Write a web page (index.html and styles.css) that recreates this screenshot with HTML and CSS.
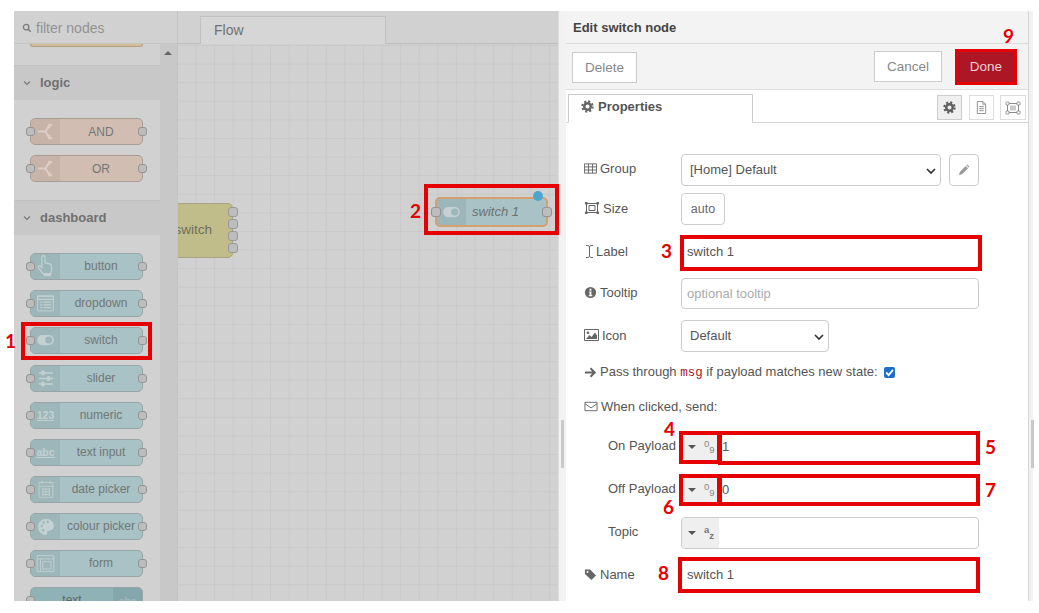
FILE: index.html
```html
<!DOCTYPE html>
<html lang="en">
<head>
    <meta charset="UTF-8">
    <title>Edit switch node</title>
    <link rel="stylesheet" href="styles.css">
</head>
<body>
    <svg class="defs" width="0" height="0">
        <symbol id="i-gear" viewBox="0 0 16 16"><circle cx="8" cy="8" r="4" fill="none" stroke="currentColor" stroke-width="3"/><circle cx="8" cy="8" r="6.3" fill="none" stroke="currentColor" stroke-width="2.6" stroke-dasharray="2.6 2.35"/></symbol>
        <symbol id="i-split" viewBox="0 0 30 27"><path d="M7 13.500h8M22 6l-3.500 1.500-3.500 6 3.500 6 3.500 1.500M19 5v5M19 17v5" fill="none" stroke="currentColor" stroke-width="2.200"/></symbol>
        <symbol id="i-toggle" viewBox="0 0 30 27"><rect x="6" y="7.500" width="18" height="11" rx="5.500" fill="currentColor"/><circle cx="18.500" cy="13" r="3.800" fill="#9db6b9"/></symbol>
    </svg>

    <div class="app">
        <div class="palette">
            <div class="search">
                <svg class="search-icon" viewBox="0 0 12 12"><circle cx="5" cy="5" r="3.300" fill="none" stroke="currentColor" stroke-width="1.600"/><path d="M7.500 7.500l3 3" stroke="currentColor" stroke-width="1.800"/></svg>
                <span>filter nodes</span>
            </div>
            <div class="palette-body">
                <div class="palette-list">
                    <div class="stub"></div>
                    <div class="category">
                        <svg class="chevron" viewBox="0 0 8 8"><path d="M1 2.500l3 3 3-3" fill="none" stroke="currentColor" stroke-width="1.100"/></svg>
                        logic
                    </div>
                    <div class="category-body">
                        <div class="node logic"><div class="node-icon"><svg viewBox="0 0 30 27"><use href="#i-split"/></svg></div><div class="node-label">AND</div><i class="port left"></i><i class="port right"></i></div>
                        <div class="node logic"><div class="node-icon"><svg viewBox="0 0 30 27"><use href="#i-split"/></svg></div><div class="node-label">OR</div><i class="port left"></i><i class="port right"></i></div>
                    </div>
                    <div class="category">
                        <svg class="chevron" viewBox="0 0 8 8"><path d="M1 2.500l3 3 3-3" fill="none" stroke="currentColor" stroke-width="1.100"/></svg>
                        dashboard
                    </div>
                    <div class="category-body">
                        <div class="node"><div class="node-icon"><svg viewBox="0 0 30 27"><path d="M11 3.500a1.700 1.700 0 0 1 3.400 0v6l5 1.200c1.500.4 2.100 1.200 2.100 2.600v5.200l-1 3h-8l-5-6.500c-1-1.500.8-3 2-1.800l1.500 1.500z" fill="none" stroke="currentColor" stroke-width="1.300"/><rect x="13" y="21" width="8" height="3" fill="currentColor"/></svg></div><div class="node-label">button</div><i class="port left"></i><i class="port right"></i></div>
                        <div class="node"><div class="node-icon"><svg viewBox="0 0 30 27"><path d="M6.500 5.500h17v16h-17z" fill="none" stroke="currentColor" stroke-width="1"/><path d="M6.500 5.500h17v3.500h-17zM9.500 12h2M13 12h8M9.500 15h2M13 15h8M9.500 18h2M13 18h8" fill="none" stroke="currentColor" stroke-width="1.200"/></svg></div><div class="node-label">dropdown</div><i class="port left"></i><i class="port right"></i></div>
                        <div class="node"><div class="node-icon"><svg viewBox="0 0 30 27"><use href="#i-toggle"/></svg></div><div class="node-label">switch</div><i class="port left"></i><i class="port right"></i></div>
                        <div class="node"><div class="node-icon"><svg viewBox="0 0 30 27"><path d="M8 7.500h15M8 13.500h15M8 19.500h15" stroke="currentColor" stroke-width="1.500"/><path d="M11 5.500h2.500v4h-2.500zM17 11.500h2.500v4h-2.500zM11 17.500h2.500v4h-2.500z" fill="currentColor" stroke="currentColor"/></svg></div><div class="node-label">slider</div><i class="port left"></i><i class="port right"></i></div>
                        <div class="node"><div class="node-icon"><span class="icon-text">123</span></div><div class="node-label">numeric</div><i class="port left"></i><i class="port right"></i></div>
                        <div class="node"><div class="node-icon"><span class="icon-text">abc</span></div><div class="node-label">text input</div><i class="port left"></i><i class="port right"></i></div>
                        <div class="node"><div class="node-icon"><svg viewBox="0 0 30 27"><path d="M8 6h15v16h-15zM8 10h15M11 4v3.500M20 4v3.500M11 13h9M11 16h9M11 19h9M12 12v8.500M15.500 12v8.500M19 12v8.500" fill="none" stroke="currentColor" stroke-width=".9"/></svg></div><div class="node-label">date picker</div><i class="port left"></i><i class="port right"></i></div>
                        <div class="node"><div class="node-icon"><svg viewBox="0 0 30 27"><path d="M15.500 5c5 0 8.500 3.500 8.500 8 0 3.500-2.500 5-5 5-1.600 0-2.500.8-2.200 2 .3 1.600-.3 2.500-1.800 2.500-4.500 0-8-4-8-8.700S11 5 15.500 5z" fill="currentColor"/><circle cx="11" cy="13" r="1.300" fill="#9db6b9"/><circle cx="13" cy="9" r="1.300" fill="#9db6b9"/><circle cx="17.500" cy="8.500" r="1.300" fill="#9db6b9"/><circle cx="12.500" cy="17.500" r="1.300" fill="#9db6b9"/></svg></div><div class="node-label">colour picker</div><i class="port left"></i><i class="port right"></i></div>
                        <div class="node"><div class="node-icon"><svg viewBox="0 0 30 27"><path d="M6 5h18v17h-18zM6 8.500h18M9.500 8.500v13.500M12 11.500h9v8h-9z" fill="none" stroke="currentColor" stroke-width="1"/></svg></div><div class="node-label">form</div><i class="port left"></i><i class="port right"></i></div>
                        <div class="node output"><div class="node-label">text</div><div class="node-icon"><span class="icon-text plain">abc</span></div><i class="port left"></i></div>
                    </div>
                </div>
                <div class="palette-scroll"><i class="scroll-up"></i></div>
            </div>
        </div>

        <div class="canvas">
            <div class="tabs"><div class="tab">Flow</div></div>
            <div class="workspace">
                <div class="flow-node yellow">
                    <span>switch</span>
                    <i class="flow-port p1"></i><i class="flow-port p2"></i><i class="flow-port p3"></i><i class="flow-port p4"></i>
                </div>
                <div class="flow-node selected">
                    <div class="node-icon"><svg viewBox="0 0 30 27"><use href="#i-toggle"/></svg></div>
                    <em>switch 1</em>
                    <i class="port left"></i><i class="port right"></i><i class="changed"></i>
                </div>
            </div>
        </div>

        <div class="editor">
            <div class="strip left-strip"><i class="thumb"></i></div>
            <div class="editor-main">
                <div class="editor-title">Edit switch node</div>
                <div class="editor-buttons">
                    <button class="btn">Delete</button>
                    <div class="spacer"></div>
                    <button class="btn">Cancel</button>
                    <button class="btn primary">Done</button>
                </div>
                <div class="editor-tabs">
                    <div class="props-tab">
                        <svg class="icon"><use href="#i-gear"/></svg>
                        Properties
                    </div>
                    <div class="spacer"></div>
                    <div class="tab-btn active"><svg class="icon dark"><use href="#i-gear"/></svg></div>
                    <div class="tab-btn"><svg class="icon" viewBox="0 0 14 14"><path d="M2.500.5h6l3 3v10h-9zM8.500.5v3h3M4.500 6h5M4.500 8.200h5M4.500 10.400h5" fill="none" stroke="currentColor" stroke-width="1"/></svg></div>
                    <div class="tab-btn wide"><svg class="icon icon-wide" viewBox="0 0 16 14"><path d="M2.500 2.500h11v9h-11z" fill="none" stroke="currentColor"/><path d="M5 4.500h6v5h-6z" fill="currentColor" opacity=".45"/><path d="M1 1h3v3h-3zM12 1h3v3h-3zM1 10h3v3h-3zM12 10h3v3h-3z" fill="#fff" stroke="currentColor" stroke-width=".8"/></svg></div>
                </div>

                <div class="form">
                    <div class="row r-group">
                        <label class="field-label"><svg class="icon" viewBox="0 0 14 14"><path d="M.5 2h13v10h-13zM.5 5.300h13M.5 8.600h13M4.800 2v10M9.200 2v10" fill="none" stroke="currentColor"/></svg>Group</label>
                        <div class="select group-select">[Home] Default<svg class="select-arrow" viewBox="0 0 10 6"><path d="M1 1l4 4 4-4" fill="none" stroke="currentColor" stroke-width="1.700"/></svg></div>
                        <button class="edit-btn"><svg class="icon" viewBox="0 0 12 12"><path d="M1 11l.8-3 6-6 2.200 2.200-6 6zM8.500 1.300l.8-.8 2.200 2.200-.8.800z" fill="currentColor"/></svg></button>
                    </div>
                    <div class="row r-size">
                        <label class="field-label"><svg class="icon icon-wide" viewBox="0 0 16 14"><path d="M2.500 2.500h11v9h-11z" fill="none" stroke="currentColor"/><path d="M5 4.500h6v5h-6z" fill="none" stroke="currentColor"/><path d="M1 1h2.500v2.500h-2.500zM12.500 1h2.500v2.500h-2.500zM1 10.500h2.500v2.500h-2.500zM12.500 10.500h2.500v2.500h-2.500z" fill="currentColor"/></svg>Size</label>
                        <button class="size-btn">auto</button>
                    </div>
                    <div class="row r-label">
                        <label class="field-label"><svg class="icon icon-cursor" viewBox="0 0 9 14"><path d="M1 1h2l1.500 1 1.500-1h2M1 13h2l1.500-1 1.500 1h2M4.500 2v10" fill="none" stroke="currentColor"/></svg>Label</label>
                        <div class="input wide-input">switch 1</div>
                    </div>
                    <div class="row r-tooltip">
                        <label class="field-label"><svg class="icon" viewBox="0 0 14 14"><circle cx="7" cy="7" r="6" fill="currentColor"/><path d="M6 3h2v2h-2zM5.500 6h2.500v4h1v1h-4v-1h1v-3h-.5z" fill="#fff"/></svg>Tooltip</label>
                        <div class="input wide-input placeholder">optional tooltip</div>
                    </div>
                    <div class="row r-icon">
                        <label class="field-label"><svg class="icon icon-pic" viewBox="0 0 15 14"><path d="M.5 1.500h14v11h-14z" fill="none" stroke="currentColor"/><path d="M2 11l3.500-4 2 2 3.500-4.500 2 3v3.500z" fill="currentColor"/><circle cx="4" cy="4.800" r="1.300" fill="currentColor"/></svg>Icon</label>
                        <div class="select icon-select">Default<svg class="select-arrow" viewBox="0 0 10 6"><path d="M1 1l4 4 4-4" fill="none" stroke="currentColor" stroke-width="1.700"/></svg></div>
                    </div>
                    <div class="line r-pass">
                        <svg class="icon" viewBox="0 0 14 14"><path d="M1 7h10M7 2.500l4.500 4.500-4.500 4.500" fill="none" stroke="currentColor" stroke-width="2.200"/></svg>
                        <span>Pass through <code>msg</code> if payload matches new state:</span>
                        <span class="checkbox"><svg viewBox="0 0 10 10"><path d="M2 5l2.200 2.300 4-4.600" fill="none" stroke="#fff" stroke-width="1.700"/></svg></span>
                    </div>
                    <div class="line r-when">
                        <svg class="icon icon-mail" viewBox="0 0 14 14"><path d="M.5 2.500h13v9h-13zM.5 4l6.500 4.500 6.500-4.500" fill="none" stroke="currentColor"/></svg>
                        <span>When clicked, send:</span>
                    </div>
                    <div class="row r-on">
                        <label class="sub-label">On Payload</label>
                        <div class="typed"><div class="type-btn"><i class="caret"></i><span class="type-mark">0<sub>9</sub></span></div><div class="typed-value">1</div></div>
                    </div>
                    <div class="row r-off">
                        <label class="sub-label">Off Payload</label>
                        <div class="typed"><div class="type-btn"><i class="caret"></i><span class="type-mark">0<sub>9</sub></span></div><div class="typed-value">0</div></div>
                    </div>
                    <div class="row r-topic">
                        <label class="sub-label">Topic</label>
                        <div class="typed"><div class="type-btn"><i class="caret"></i><span class="type-mark bold">a<sub>z</sub></span></div><div class="typed-value"></div></div>
                    </div>
                    <div class="row r-name">
                        <label class="field-label"><svg class="icon" viewBox="0 0 14 14"><path d="M1 1.500h5.500l6.500 6.500-5 5-7-6.500z" fill="currentColor"/><circle cx="3.800" cy="4.300" r="1.100" fill="#fff"/></svg>Name</label>
                        <div class="input wide-input">switch 1</div>
                    </div>
                </div>
            </div>
            <div class="strip right-strip"><i class="thumb"></i></div>
        </div>
    </div>

    <!-- red marks over the screenshot -->
    <i class="mark m1"></i><b class="num n1">1</b>
    <i class="mark m2"></i><b class="num n2">2</b>
    <i class="mark m3"></i><b class="num n3">3</b>
    <i class="mark m4"></i><b class="num n4">4</b>
    <i class="mark m5"></i><b class="num n5">5</b>
    <i class="mark m6"></i><b class="num n6">6</b>
    <i class="mark m7"></i><b class="num n7">7</b>
    <i class="mark m8"></i><b class="num n8">8</b>
    <i class="mark m9"></i><b class="num n9">9</b>
</body>
</html>
```

FILE: styles.css
```css
:root {
    --panel: #d1d1d1;
    --panel-dark: #c8c8c8;
    --line: #c4c4c4;
    --teal: #a8c2c5;
    --teal-dark: #9db6b9;
    --text: #555555;
    --border: #cccccc;
    --red: #e60000;
}

* {
    box-sizing: border-box;
}

body {
    margin: 0;
    background: #ffffff;
    font-family: "Liberation Sans", Arial, sans-serif;
    font-size: 14px;
    color: var(--text);
    overflow: hidden;
}

.defs {
    position: absolute;
}

.app {
    display: flex;
    width: 1019px;
    height: 590px;
    margin: 11px 0 0 14px;
}

/* palette */
.palette {
    width: 163px;
    display: flex;
    flex-direction: column;
    background: var(--panel);
}

.search {
    height: 33px;
    flex: none;
    display: flex;
    align-items: center;
    gap: 4px;
    padding: 2px 0 0 8px;
    border-bottom: 1px solid var(--line);
    color: #939393;
    font-size: 14px;
}

.search-icon {
    width: 10px;
    height: 10px;
    color: #7c7c7c;
}

.palette-body {
    flex: 1;
    display: flex;
    overflow: hidden;
}

.palette-list {
    width: 146px;
}

.palette-scroll {
    width: 17px;
    background: var(--panel-dark);
    display: flex;
    justify-content: center;
    padding-top: 7px;
}

.scroll-up {
    width: 0;
    height: 0;
    border: 4px solid transparent;
    border-top: 0;
    border-bottom: 4px solid #666666;
    margin-right: 2px;
}

.stub {
    width: 113px;
    height: 3px;
    margin: 0 0 18px 16px;
    background: #d4bc97;
    border: 1px solid #b5a285;
    border-top: 0;
    border-radius: 0 0 4px 4px;
}

.category {
    height: 35px;
    display: flex;
    align-items: center;
    gap: 9px;
    padding: 0 0 1px 9px;
    background: var(--panel-dark);
    border-top: 1px solid #c2c2c2;
    font-size: 13px;
    font-weight: bold;
    color: #707070;
}

.chevron {
    width: 8px;
    height: 8px;
    color: #777777;
}

.category-body {
    display: flex;
    flex-direction: column;
    gap: 10.150px;
    padding: 18px 0 18px 16px;
}

.node {
    position: relative;
    flex: none;
    width: 113px;
    height: 27px;
    display: flex;
    background: var(--teal);
    border: 1px solid #97a5a7;
    border-radius: 5px;
    font-size: 12px;
    color: #727777;
}

.node-icon {
    width: 29px;
    flex: none;
    display: flex;
    align-items: center;
    justify-content: center;
    background: var(--teal-dark);
    color: #c3d1d3;
    border-radius: 4px 0 0 4px;
}

.node-icon svg {
    width: 29px;
    height: 25px;
}

.node-label {
    flex: 1;
    text-align: center;
    line-height: 25px;
    white-space: nowrap;
}

.icon-text {
    font-size: 10.500px;
    font-weight: bold;
    border-bottom: 1.500px solid #c3d1d3;
    line-height: 10px;
}

.icon-text.plain {
    border-bottom: 0;
    color: #a3b9bb;
}

.node.logic {
    background: #d2bdb2;
    border-color: #a89c95;
}

.node.logic .node-label {
    line-height: 26px;
}

.node.logic .node-icon {
    background: #c8b3a8;
    color: #dccdc5;
}

.node.output {
    background: #8fb2b6;
}

.node.output .node-icon {
    background: #85a7ab;
    border-radius: 0 4px 4px 0;
}

.node.output .node-label {
    color: #5f6666;
}

.port {
    position: absolute;
    top: 8px;
    width: 9px;
    height: 9px;
    background: #bdbdbd;
    border: 1px solid #949494;
    border-radius: 3px;
}

.port.left {
    left: -5px;
}

.port.right {
    right: -5px;
}

/* canvas */
.canvas {
    width: 381px;
    display: flex;
    flex-direction: column;
    border-left: 1px solid #c4c4c4;
    background: var(--panel);
}

.tabs {
    height: 33px;
    flex: none;
    padding: 5px 0 0 22px;
    background: var(--panel);
    border-bottom: 1px solid #bdbdbd;
}

.tab {
    width: 186px;
    height: 28px;
    padding: 5px 0 0 13px;
    background: #d6d6d6;
    border: 1px solid #c2c2c2;
    border-bottom: 0;
    font-size: 14px;
    color: #727272;
}

.workspace {
    position: relative;
    flex: 1;
    overflow: hidden;
    background-color: var(--panel);
    background-image:
        linear-gradient(to right, #c9c9c9 1px, transparent 1px),
        linear-gradient(to bottom, #c9c9c9 1px, transparent 1px);
    background-size: 18.600px 18.600px;
    background-position: -1px 1px;
}

.flow-node {
    position: absolute;
    display: flex;
    align-items: center;
}

.yellow {
    left: -30px;
    top: 159px;
    width: 85px;
    height: 55px;
    justify-content: flex-end;
    padding: 0 20px 2px 0;
    background: #c1bd8a;
    border: 1px solid #a7a481;
    border-radius: 5px;
    font-size: 13.500px;
    color: #6d6d5c;
}

.flow-port {
    position: absolute;
    right: -6px;
    width: 10px;
    height: 10px;
    background: #bdbdbd;
    border: 1px solid #999999;
    border-radius: 3px;
}

.p1 { top: 3px; }
.p2 { top: 15px; }
.p3 { top: 27px; }
.p4 { top: 39px; }

.selected {
    left: 257px;
    top: 153px;
    width: 113px;
    height: 30px;
    background: var(--teal);
    border: 2px solid #d3a070;
    border-radius: 5px;
    color: #6d7272;
}

.selected em {
    flex: 1;
    padding: 0 0 1px 6px;
    font-size: 13px;
}

.selected .node-icon {
    height: 26px;
}

.selected .port {
    top: 8px;
    height: 10px;
    width: 10px;
}

.selected .port.left {
    left: -6px;
}

.selected .port.right {
    right: -6px;
}

.changed {
    position: absolute;
    top: -8px;
    right: 3px;
    width: 10px;
    height: 10px;
    background: #4ca6d0;
    border-radius: 50%;
}

/* editor */
.editor {
    width: 475px;
    display: flex;
}

.strip {
    position: relative;
    background: #f2f2f2;
    border-left: 1px solid #dddddd;
}

.left-strip {
    width: 8px;
}

.right-strip {
    width: 5px;
    border-left: 1px solid #d5d5d5;
}

.thumb {
    position: absolute;
    top: 409px;
    left: 2px;
    width: 3px;
    height: 48px;
    background: #c9c9c9;
}

.editor-main {
    flex: 1;
    display: flex;
    flex-direction: column;
}

.editor-title {
    height: 33px;
    flex: none;
    padding: 9px 0 0 7px;
    background: #f3f3f3;
    border-bottom: 1px solid #dddddd;
    font-size: 13px;
    font-weight: bold;
    color: #444444;
}

.editor-buttons {
    height: 46px;
    flex: none;
    display: flex;
    align-items: center;
    gap: 13px;
    padding: 0 11px 0 6px;
    background: #f3f3f3;
    border-bottom: 1px solid #dddddd;
}

.spacer {
    flex: 1;
}

.btn {
    width: 68px;
    height: 31px;
    padding: 0;
    background: #ffffff;
    border: 1px solid #cccccc;
    font: 13.500px "Liberation Sans", Arial, sans-serif;
    color: #888888;
}

.btn:first-child {
    width: 65px;
    margin-top: 2px;
}

.btn.primary {
    width: 62px;
    height: 31px;
    background: #ad1625;
    color: #e9d3d5;
    border: 0;
}

.editor-tabs {
    height: 33px;
    flex: none;
    display: flex;
    align-items: flex-end;
    gap: 7px;
    padding-right: 2px;
    border-bottom: 1px solid #d4d4d4;
    background-color: #ffffff;
}

.props-tab {
    width: 185px;
    height: 29px;
    margin: 0 0 -1px 2px;
    padding: 0 0 5px 12px;
    display: flex;
    align-items: center;
    gap: 4px;
    background: #ffffff;
    border: 1px solid #cccccc;
    border-bottom: 1px solid #ffffff;
    font-size: 13px;
    font-weight: bold;
    color: #555555;
}

.tab-btn {
    width: 25px;
    height: 25px;
    margin-bottom: 2px;
    display: flex;
    align-items: center;
    justify-content: center;
    border: 1px solid #dddddd;
    color: #8a8a8a;
    background: #ffffff;
}

.tab-btn.wide {
    width: 26px;
    margin-left: -1px;
}

.tab-btn.active {
    background: #efefef;
    border-color: #cccccc;
}

.icon {
    width: 13px;
    height: 13px;
    flex: none;
    color: #666666;
}

.icon-wide {
    width: 16px;
    height: 14px;
}

.icon-cursor {
    width: 9px;
    height: 15px;
    margin: 0 -1px 0 1px;
}

.icon-pic {
    width: 15px;
    height: 14px;
}

.icon-mail {
    width: 14px;
}

.icon.dark {
    color: #5f5f5f;
}

.tab-btn .icon {
    color: #8a8a8a;
}

.tab-btn.active .icon {
    color: #5f5f5f;
}

.form {
    padding-left: 18px;
    flex: 1;
}

.row {
    display: flex;
    align-items: center;
    height: 32px;
}

.r-group { margin-top: 31px; }
.r-size { margin-top: 7px; }
.r-label { margin-top: 11px; }
.r-tooltip { margin-top: 10px; height: 31px; }
.r-icon { margin-top: 11px; }
.r-on { margin-top: 15px; }
.r-off { margin-top: 11px; }
.r-topic { margin-top: 11px; }
.r-name { margin-top: 10px; }

.field-label {
    width: 97px;
    flex: none;
    display: flex;
    align-items: center;
    gap: 3px;
    margin-top: -2px;
    font-size: 13px;
}

.r-group .field-label {
    margin-top: -4px;
}

.sub-label {
    width: 97px;
    flex: none;
    margin-top: -3px;
    padding-left: 24px;
    font-size: 13px;
    white-space: nowrap;
}

.select,
.input,
.size-btn,
.edit-btn {
    background: #ffffff;
    border: 1px solid #cccccc;
    border-radius: 4px;
    font: 13px "Liberation Sans", Arial, sans-serif;
    color: #555555;
}

.select {
    position: relative;
    height: 100%;
    display: flex;
    align-items: center;
    padding: 0 0 1px 8px;
}

.group-select {
    width: 260px;
}

.icon-select {
    width: 148px;
}

.select-arrow {
    position: absolute;
    right: 4px;
    top: 13px;
    width: 10px;
    height: 6px;
    color: #333333;
}

.edit-btn {
    width: 30px;
    height: 100%;
    margin-left: 8px;
    padding: 0;
    display: flex;
    align-items: center;
    justify-content: center;
}

.edit-btn .icon {
    width: 12px;
    height: 12px;
    color: #999999;
}

.size-btn {
    width: 44px;
    height: 100%;
    padding: 0;
    font-size: 12.500px;
    color: #666666;
}

.input {
    height: 100%;
    display: flex;
    align-items: center;
    padding: 0 0 1px 5px;
}

.wide-input {
    width: 298px;
}

.placeholder {
    color: #aaaaaa;
}

.line {
    display: flex;
    align-items: center;
    gap: 3px;
    height: 20px;
    font-size: 13px;
}

.r-pass { margin-top: 10px; }
.r-when { margin-top: 14px; }

code {
    font-family: "Liberation Mono", monospace;
    font-size: 12.500px;
    color: #ad1625;
}

.checkbox {
    width: 11px;
    height: 11px;
    margin-left: 3px;
    background: #1d6ec9;
    border-radius: 2px;
    display: flex;
}

.typed {
    width: 298px;
    height: 100%;
    display: flex;
    background: #ffffff;
    border: 1px solid #cccccc;
    border-radius: 4px;
    font-size: 13px;
    overflow: hidden;
}

.type-btn {
    width: 37px;
    flex: none;
    display: flex;
    align-items: center;
    gap: 8px;
    padding-left: 6px;
    background: #efefef;
}

.caret {
    width: 0;
    height: 0;
    border: 4px solid transparent;
    border-bottom: 0;
    border-top: 4px solid #555555;
}

.type-mark {
    font-size: 9.500px;
    color: #888888;
    line-height: 10px;
    margin-top: -6px;
}

.type-mark.bold {
    font-weight: bold;
    color: #777777;
}

.type-mark sub {
    font-size: 9.500px;
    vertical-align: -6px;
    line-height: 0;
}

.typed-value {
    flex: 1;
    padding-left: 3px;
    line-height: 30px;
}

/* annotation boxes */
.mark {
    position: absolute;
    border: 4px solid var(--red);
}

.m1 { left: 21px; top: 322px; width: 131px; height: 38px; }
.m2 { left: 424px; top: 184px; width: 135px; height: 51px; }
.m3 { left: 680px; top: 235px; width: 302px; height: 36px; }
.m4 { left: 679px; top: 431px; width: 42px; height: 33px; }
.m5 { left: 718px; top: 431px; width: 262px; height: 34px; }
.m6 { left: 679px; top: 474px; width: 42px; height: 32px; }
.m7 { left: 718px; top: 474px; width: 262px; height: 32px; }
.m8 { left: 678px; top: 557px; width: 302px; height: 36px; }
.m9 { left: 955px; top: 49px; width: 62px; height: 36px; border-width: 3px; }

.num {
    position: absolute;
    font-family: Lato, "Liberation Sans", sans-serif;
    font-size: 19px;
    line-height: 16px;
    font-weight: bold;
    color: var(--red);
}

.n1 { left: 5px; top: 333px; }
.n2 { left: 410px; top: 203px; }
.n3 { left: 661px; top: 243px; }
.n4 { left: 664px; top: 421px; }
.n5 { left: 985px; top: 439px; }
.n6 { left: 663px; top: 499px; }
.n7 { left: 985px; top: 482px; }
.n8 { left: 658px; top: 565px; }
.n9 { left: 1003px; top: 28px; }
```
